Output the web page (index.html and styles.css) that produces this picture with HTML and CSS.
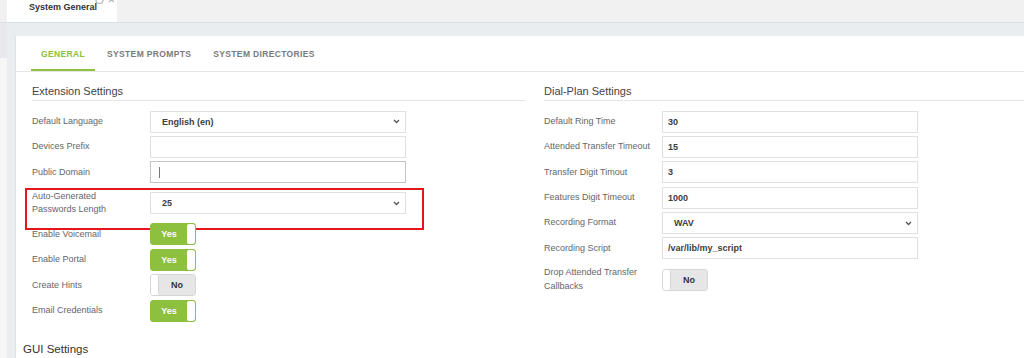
FILE: index.html
```html
<!DOCTYPE html>
<html lang="en">
<head>
  <meta charset="UTF-8" />
  <title>System General</title>
  <link rel="stylesheet" href="styles.css">
</head>
<body>
  <div class="topbar">
    <div class="doc-tab">
      System General
      <svg class="doc-tab-tools" width="26" height="10" viewBox="0 0 26 10">
        <path d="M2 5a3.5 3.5 0 1 0 3.5-3.5" fill="none" stroke="#b5b5b5" stroke-width="1.2"/>
        <path d="M15 2l5 5M20 2l-5 5" stroke="#b5b5b5" stroke-width="1.2"/>
      </svg>
    </div>
  </div>

  <div class="workspace">
    <div class="rail"></div>
    <div class="stage">
      <div class="panel">
        <nav class="tabs">
          <a class="tab active">General</a>
          <a class="tab">System Prompts</a>
          <a class="tab">System Directories</a>
        </nav>

        <div class="columns">
          <section class="group group-left">
            <h3 class="group-title">Extension Settings</h3>
            <div class="row">
              <label class="row-label">Default Language</label>
              <div class="field select">English (en)
                <svg class="chevron" width="7" height="5" viewBox="0 0 7 5"><path d="M1 1l2.5 2.5L6 1" /></svg>
              </div>
            </div>
            <div class="row">
              <label class="row-label">Devices Prefix</label>
              <div class="field"></div>
            </div>
            <div class="row">
              <label class="row-label">Public Domain</label>
              <div class="field focused"><span class="caret"></span></div>
            </div>
            <div class="row highlighted">
              <label class="row-label">Auto-Generated<br>Passwords Length</label>
              <div class="field select">25
                <svg class="chevron" width="7" height="5" viewBox="0 0 7 5"><path d="M1 1l2.5 2.5L6 1" /></svg>
              </div>
            </div>
            <div class="row">
              <label class="row-label">Enable Voicemail</label>
              <div class="toggle on"><span class="toggle-text">Yes</span><span class="knob"></span></div>
            </div>
            <div class="row">
              <label class="row-label">Enable Portal</label>
              <div class="toggle on"><span class="toggle-text">Yes</span><span class="knob"></span></div>
            </div>
            <div class="row">
              <label class="row-label">Create Hints</label>
              <div class="toggle off"><span class="knob"></span><span class="toggle-text">No</span></div>
            </div>
            <div class="row">
              <label class="row-label">Email Credentials</label>
              <div class="toggle on"><span class="toggle-text">Yes</span><span class="knob"></span></div>
            </div>
          </section>

          <section class="group group-right">
            <h3 class="group-title">Dial-Plan Settings</h3>
            <div class="row">
              <label class="row-label">Default Ring Time</label>
              <div class="field">30</div>
            </div>
            <div class="row">
              <label class="row-label">Attended Transfer Timeout</label>
              <div class="field">15</div>
            </div>
            <div class="row">
              <label class="row-label">Transfer Digit Timout</label>
              <div class="field">3</div>
            </div>
            <div class="row">
              <label class="row-label">Features Digit Timeout</label>
              <div class="field">1000</div>
            </div>
            <div class="row">
              <label class="row-label">Recording Format</label>
              <div class="field select">WAV
                <svg class="chevron" width="7" height="5" viewBox="0 0 7 5"><path d="M1 1l2.5 2.5L6 1" /></svg>
              </div>
            </div>
            <div class="row">
              <label class="row-label">Recording Script</label>
              <div class="field">/var/lib/my_script</div>
            </div>
            <div class="row">
              <label class="row-label">Drop Attended Transfer<br>Callbacks</label>
              <div class="toggle off"><span class="knob"></span><span class="toggle-text">No</span></div>
            </div>
          </section>
        </div>

        <h3 class="gui-title">GUI Settings</h3>
      </div>
    </div>
  </div>
</body>
</html>
```

FILE: styles.css
```css
:root {
  --green: #8dc03f;
  --label: #666666;
  --value: #3d3d3d;
  --line: #e6e6e6;
  --field-border: #e0e0e0;
}

* {
  margin: 0;
  padding: 0;
  box-sizing: border-box;
}

body {
  font-family: 'Liberation Sans', Arial, sans-serif;
  background: #f1f2f2;
  color: #444;
  height: 358px;
  overflow: hidden;
}

/* Top document bar */
.topbar {
  height: 23px;
  background: #f1f1f1;
  border-bottom: 1px solid #dcdfe2;
  padding-left: 7px;
}

.doc-tab {
  position: relative;
  width: 110px;
  height: 22px;
  background: #fff;
  padding: 2px 0 0 22px;
  font-size: 9px;
  line-height: 11px;
  font-weight: bold;
  color: #333;
}

.doc-tab-tools {
  position: absolute;
  top: -5px;
  left: 87px;
}

/* Workspace */
.workspace {
  display: flex;
  height: 335px;
}

.rail {
  width: 7px;
  background: linear-gradient(#e7e9ec 0 35px, #f6f6f6 35px);
}

.stage {
  flex: 1;
  background: #eaedf0;
  padding: 13px 0 0 8px;
}

.panel {
  height: 100%;
  background: #fff;
  border-left: 1px solid #dfe1e3;
  padding-left: 16px;
}

/* Tabs */
.tabs {
  display: flex;
  height: 36px;
  margin-left: -16px;
  padding-left: 15px;
  border-bottom: 1px solid var(--line);
}

.tab {
  display: flex;
  align-items: center;
  padding: 0 10px;
  margin-right: 2px;
  font-size: 8.5px;
  font-weight: bold;
  letter-spacing: 0.35px;
  text-transform: uppercase;
  color: #7a7a7a;
}

.tab.active {
  color: var(--green);
  box-shadow: inset 0 -2px 0 var(--green);
}

/* Columns */
.columns {
  display: flex;
  gap: 19px;
  padding-top: 13px;
}

.group-left {
  width: 493px;
}

.group-right {
  flex: 1;
}

.group-title {
  font-size: 11px;
  line-height: 13px;
  font-weight: normal;
  color: #444;
  padding-bottom: 2px;
  border-bottom: 1px solid var(--line);
  margin-bottom: 9.5px;
}

.row {
  position: relative;
  display: flex;
  align-items: center;
  min-height: 22px;
  margin-bottom: 3.4px;
}

.row-label {
  width: 118px;
  flex-shrink: 0;
  padding: 3.3px 0;
  font-size: 9px;
  line-height: 13.4px;
  color: var(--label);
}

.field {
  display: flex;
  align-items: center;
  justify-content: space-between;
  width: 256px;
  height: 22px;
  border: 1px solid var(--field-border);
  padding: 0 5px;
  font-size: 9px;
  font-weight: bold;
  color: var(--value);
}

.field.select {
  padding: 0 5px 0 11px;
}

.field.focused {
  border-color: #c4c4c4;
  padding-left: 8px;
}

.caret {
  width: 1px;
  height: 11px;
  background: #777;
}

.chevron path {
  fill: none;
  stroke: #555;
  stroke-width: 1.3;
}

/* Highlight annotation around a row */
.row.highlighted::after {
  content: '';
  position: absolute;
  top: 1px;
  left: -7px;
  width: 395px;
  height: 38px;
  border: 2px solid #e3161c;
  pointer-events: none;
}

/* Yes / No switches */
.toggle {
  display: flex;
  width: 46px;
  height: 22px;
  border: 1px solid #d6d6d6;
  border-radius: 3px;
  overflow: hidden;
}

.toggle-text {
  flex: 1;
  display: flex;
  align-items: center;
  justify-content: center;
  font-size: 9px;
  font-weight: bold;
}

.knob {
  width: 8px;
  background: #fff;
  border-radius: 2px;
}

.toggle.on {
  background: var(--green);
  border-color: var(--green);
}

.toggle.on .toggle-text {
  color: #fff;
}

.toggle.off .toggle-text {
  background: #e6e6e6;
  color: #333;
}

.toggle.off .knob {
  border-right: 1px solid #d6d6d6;
}

.gui-title {
  margin: 17px 0 0 -9px;
  font-size: 11.5px;
  line-height: 14px;
  font-weight: normal;
  color: #333;
}
```
